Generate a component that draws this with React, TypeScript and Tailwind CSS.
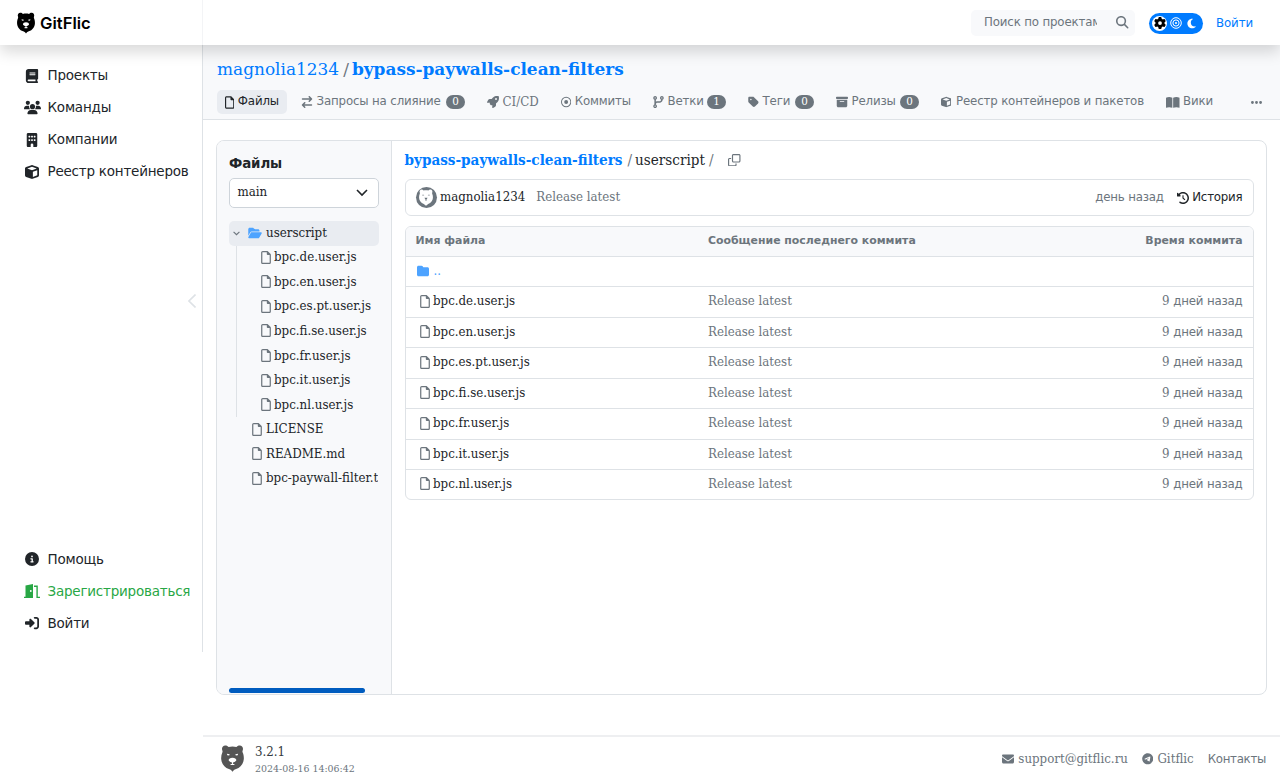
import { ReactNode } from "react";
import clsx from "clsx";
import {
  FaArrowRightArrowLeft,
  FaBook,
  FaBoxArchive,
  FaBuilding,
  FaCircleInfo,
  FaClockRotateLeft,
  FaCodeBranch,
  FaCube,
  FaEllipsis,
  FaEnvelope,
  FaFolder,
  FaFolderOpen,
  FaGear,
  FaMagnifyingGlass,
  FaMoon,
  FaRegCircleDot,
  FaRegClone,
  FaRegFile,
  FaRightToBracket,
  FaRocket,
  FaTag,
  FaTelegram,
  FaUsers,
} from "react-icons/fa6";

const sans = "font-['DejaVu_Sans',sans-serif]";
const serif = "font-['DejaVu_Serif_Condensed','DejaVu_Serif',serif]";
const serifWide = "font-['DejaVu_Serif',serif]";

const files = [
  "bpc.de.user.js",
  "bpc.en.user.js",
  "bpc.es.pt.user.js",
  "bpc.fi.se.user.js",
  "bpc.fr.user.js",
  "bpc.it.user.js",
  "bpc.nl.user.js",
];

const rootFiles = ["LICENSE", "README.md", "bpc-paywall-filter.txt"];

function BearIcon({ className, face }: { className?: string; face: string }) {
  return (
    <svg viewBox="0 0 22 26" className={className} fill="currentColor">
      <path d="M1.2 5.2C.2 2.6 1.8.4 4 .4c1.5 0 2.6.6 3.2 1.6 2.4-.7 5.2-.7 7.6 0C15.4 1 16.5.4 18 .4c2.2 0 3.8 2.2 2.8 4.8-.3.7-.3 1.3 0 2 .9 2 1.2 4 1.1 6.3-.2 4.3-3.1 8.1-7.4 9.7-1 .4-1.8.7-2.3 1.2L11 25.8l-1.2-1.4c-.5-.5-1.3-.8-2.3-1.2C3.2 21.6.3 17.8.1 13.5 0 11.2.3 9.2 1.2 7.2c.3-.7.3-1.3 0-2Z" />
      <g fill={face}>
        <path d="M5.6 8.4l2.700.6-.5 1.1-1.800-.3ZM16.400 8.400l-2.700.6.5 1.100 1.800-.3Z" />
        <path d="M11 12.200c2.200 0 3.700 1 3.700 2.300 0 .9-1.200 1.800-2.700 2.200-.5.2-.6.7-.6 1.300l1.700.6-.4.7H9.300l-.4-.7 1.700-.6c0-.6-.1-1.100-.6-1.300-1.500-.4-2.700-1.300-2.700-2.200 0-1.300 1.500-2.300 3.700-2.300Z" />
      </g>
    </svg>
  );
}

function Avatar() {
  return (
    <div className="flex size-[21px] items-center justify-center rounded-full bg-[#6c757d]">
      <svg viewBox="0 0 22 26" className="h-[17px] w-[14px]">
        <path
          fill="#fff"
          d="M1.2 5.2C.2 2.6 1.8.4 4 .4c1.5 0 2.6.6 3.2 1.6 2.4-.7 5.2-.7 7.6 0C15.4 1 16.5.4 18 .4c2.2 0 3.8 2.2 2.8 4.8-.3.7-.3 1.3 0 2 .9 2 1.2 4 1.1 6.3-.2 4.3-3.1 8.1-7.4 9.7L11 25.8l-3.500-2.600C3.200 21.600.3 17.800.1 13.500 0 11.200.3 9.200 1.200 7.200c.3-.7.3-1.300 0-2Z"
        />
        <path fill="#8d949a" d="M5 8.500h3V10H5ZM14 8.500h3V10h-3Z" />
        <path fill="#6c757d" d="M8.500 13.500h5L11.600 16.500v2h-1.200v-2Z" />
      </svg>
    </div>
  );
}

function OpenBook() {
  return (
    <svg viewBox="0 0 27 22" className="h-[11px] w-[13.5px]" fill="currentColor">
      <path d="M0 1.500C4-.3 8.500-.3 12.700 1.500v20C8.500 20 4 20 0 21.500ZM27 1.500C23-.3 18.500-.3 14.300 1.500v20c4.200-1.500 8.700-1.500 12.700 0Z" />
    </svg>
  );
}

function DoorIcon() {
  return (
    <svg viewBox="0 0 16 14" className="h-[14px] w-[16px] shrink-0" fill="currentColor">
      <path d="M1.500 1.600 9 0v14H0v-1.300h1.500Z" />
      <path d="M10 1.600h3.800v11.100H16V14h-3.600V2.900H10Z" />
      <circle cx="6.800" cy="7" r=".9" fill="#fff" />
    </svg>
  );
}

function Header() {
  return (
    <header className="relative z-10 flex h-[45px] shrink-0 items-center bg-white shadow-[0_7px_14px_rgba(0,0,0,0.15)]">
      <div className="flex h-full w-[203px] items-center border-r border-[#f3f4f6] pl-[17px]">
        <BearIcon className="h-[22px] w-[18px] text-black" face="#fff" />
        <span className="ml-[5px] mt-[2px] font-['Inter',sans-serif] text-[16.6px] font-semibold leading-none text-black">
          GitFlic
        </span>
      </div>
      <div className="ml-auto flex h-[26px] w-[164px] items-center rounded-[5px] bg-[#f8f9fb] pl-[13px] text-[#6c757d]">
        <span className={clsx(sans, "mt-px w-[113px] overflow-hidden whitespace-nowrap text-[11.8px] tracking-[-0.15px]")}>
          Поиск по проектам
        </span>
        <FaMagnifyingGlass className="ml-[19px] size-[12.5px]" />
      </div>
      <div className="ml-[14px] mt-px flex h-[21px] w-[54px] items-center rounded-full bg-[#007bff] pl-[3px] text-white">
        <span className="flex size-[15px] items-center justify-center rounded-full bg-white text-black">
          <FaGear className="size-[12px]" />
        </span>
        <svg viewBox="0 0 12 12" className="ml-[3px] size-[12px]" fill="none" stroke="currentColor">
          <circle cx="6" cy="6" r="5.3" strokeWidth="1" />
          <circle cx="6" cy="6" r="3.1" strokeWidth="1" />
          <circle cx="6" cy="6" r="1" fill="currentColor" stroke="none" />
        </svg>
        <FaMoon className="ml-[4px] size-[11px]" />
      </div>
      <a className={clsx(sans, "ml-[13px] mr-[28px] mt-[2px] w-[36px] whitespace-nowrap text-[11.8px] tracking-[-0.1px] text-[#007bff]")}>
        Войти
      </a>
    </header>
  );
}

function NavItem({ icon, label, className }: { icon: ReactNode; label: string; className?: string }) {
  return (
    <a className={clsx("flex h-8 items-center whitespace-nowrap", className ?? "text-[#212529]")}>
      <span className="flex w-[17px] justify-center">{icon}</span>
      <span className="ml-[7px]">{label}</span>
    </a>
  );
}

function Sidebar() {
  return (
    <aside
      className={clsx(
        sans,
        "relative flex h-[607px] w-[203px] shrink-0 flex-col border-r border-[#dee2e6] pl-[23.5px] pt-[14.5px] text-[13.5px] tracking-[-0.22px]"
      )}
    >
      <NavItem icon={<FaBook className="size-[14px]" />} label="Проекты" />
      <NavItem icon={<FaUsers className="size-[17px]" />} label="Команды" />
      <NavItem icon={<FaBuilding className="size-[14px]" />} label="Компании" />
      <NavItem icon={<FaCube className="size-[14px]" />} label="Реестр контейнеров" />
      <div className="mt-auto pb-[13px]">
        <NavItem icon={<FaCircleInfo className="size-[14px]" />} label="Помощь" />
        <NavItem icon={<DoorIcon />} label="Зарегистрироваться" className="text-[#28a745]" />
        <NavItem icon={<FaRightToBracket className="size-[14px]" />} label="Войти" />
      </div>
      <svg
        viewBox="0 0 8 14"
        className="absolute right-[6px] top-[249px] h-[14px] w-[8px]"
        fill="none"
        stroke="#dee2e6"
        strokeWidth="1.6"
      >
        <path d="M7.5.5 1 7l6.5 6.5" />
      </svg>
    </aside>
  );
}

interface TabProps {
  icon: ReactNode;
  label: string;
  width: string;
  count?: number;
  active?: boolean;
  latin?: boolean;
}

function Tab({ icon, label, width, count, active, latin }: TabProps) {
  return (
    <a
      className={clsx(
        "flex h-6 shrink-0 items-center whitespace-nowrap rounded-[5px] px-2",
        width,
        latin ? serif : sans,
        latin ? "text-[13.15px]" : "text-[11.8px] tracking-[-0.15px]",
        active ? "bg-[#e9ecf1] text-[#212529]" : "text-[#6c757d]"
      )}
    >
      {icon}
      <span className="ml-[3.5px]">{label}</span>
      {count !== undefined && (
        <span
          className={clsx(
            serif,
            "ml-auto flex h-[14px] w-[19px] items-center justify-center rounded-full bg-[#6c757d] text-[11.5px] tracking-normal text-white"
          )}
        >
          {count}
        </span>
      )}
    </a>
  );
}

function ProjectHeader() {
  return (
    <div className="h-[75px] border-b border-[#dee2e6] bg-[#f8f9fb] pl-[14px] pt-[13px]">
      <div className={clsx(serifWide, "flex h-6 items-center text-[16.95px] text-[#007bff]")}>
        <a>magnolia1234</a>
        <span className="ml-[4px] mr-[3px] text-[#6c757d]">/</span>
        <a className="font-bold">bypass-paywalls-clean-filters</a>
      </div>
      <nav className="mt-[8px] flex gap-[6px]">
        <Tab width="w-[70px]" active icon={<FaRegFile className="h-[13px] w-[10px]" />} label="Файлы" />
        <Tab width="w-[180px]" count={0} icon={<FaArrowRightArrowLeft className="size-[12px]" />} label="Запросы на слияние" />
        <Tab width="w-[68px]" latin icon={<FaRocket className="size-[12px]" />} label="CI/CD" />
        <Tab width="w-[86px]" icon={<FaRegCircleDot className="size-[12px]" />} label="Коммиты" />
        <Tab width="w-[89px]" count={1} icon={<FaCodeBranch className="h-[12px] w-[11px]" />} label="Ветки" />
        <Tab width="w-[82px]" count={0} icon={<FaTag className="h-[12px] w-[11px]" />} label="Теги" />
        <Tab width="w-[99px]" count={0} icon={<FaBoxArchive className="size-[12px]" />} label="Релизы" />
        <Tab width="w-[219px]" icon={<FaCube className="mr-px size-[12px]" />} label="Реестр контейнеров и пакетов" />
        <Tab width="w-[63px]" icon={<OpenBook />} label="Вики" />
        <span className="ml-[23px] flex h-6 items-center text-[#6c757d]">
          <FaEllipsis className="size-[13px]" />
        </span>
      </nav>
    </div>
  );
}

function FileTree() {
  return (
    <div className={clsx(serif, "flex w-[175px] shrink-0 flex-col border-r border-[#dee2e6] bg-[#f8f9fb] px-3 pt-[13px] text-[13.2px] text-[#212529]")}>
      <h2 className={clsx(sans, "flex h-5 items-center text-[13.4px] font-bold tracking-[-0.1px]")}>Файлы</h2>
      <div className="mt-[4px] flex h-[30px] w-[150px] shrink-0 items-center justify-between rounded-[5px] border border-[#ced4da] bg-white pl-[7.5px] pr-[10px]">
        <span className="pb-[2px]">main</span>
        <svg viewBox="0 0 12 8" className="h-[8px] w-[12px]" fill="none" stroke="#212529" strokeWidth="1.6">
          <path d="m1 1 5 5 5-5" />
        </svg>
      </div>

      <div className="mt-[13px] flex h-[24.5px] w-[150px] items-center rounded-[5px] bg-[#e9ecf1] pl-[4px]">
        <svg viewBox="0 0 8 6" className="h-[5px] w-[7px]" fill="none" stroke="#6c757d" strokeWidth="1.4">
          <path d="m.5 1 3.500 3.500L7.500 1" />
        </svg>
        <FaFolderOpen className="ml-[8px] h-[12px] w-[14px] text-[#4da3ff]" />
        <span className="ml-[4px] pb-px">userscript</span>
      </div>
      <div className="ml-[7px] border-l border-[#dee2e6]">
        {files.map((name) => (
          <div key={name} className="flex h-[24.55px] items-center whitespace-nowrap pb-px pl-[24px]">
            <FaRegFile className="h-[13px] w-[10px] text-[#6c757d]" />
            <span className="ml-[3px]">{name}</span>
          </div>
        ))}
      </div>
      {rootFiles.map((name) => (
        <div key={name} className="flex h-[24.55px] items-center overflow-hidden whitespace-nowrap pb-px pl-[23px]">
          <FaRegFile className="h-[13px] w-[10px] shrink-0 text-[#6c757d]" />
          <span className="ml-[4px] w-[112px] shrink-0 overflow-hidden">{name}</span>
        </div>
      ))}
      <div className="mb-px mt-auto h-[5px] w-[136px] rounded-full bg-[#005cbf]" />
    </div>
  );
}

function FileTable() {
  return (
    <div className="mt-[10px] overflow-hidden rounded-[6px] border border-[#dee2e6] text-[13.15px]">
      <div
        className={clsx(
          sans,
          "flex h-[29px] items-center bg-[#f8f9fb] px-[10px] text-[10.9px] font-bold text-[#6c757d]"
        )}
      >
        <span className="w-[292.5px]">Имя файла</span>
        <span>Сообщение последнего коммита</span>
        <span className="ml-auto">Время коммита</span>
      </div>
      <div className="flex h-[30.4px] items-center border-t border-[#dee2e6] pb-px pl-[11px] text-[#4da3ff]">
        <FaFolder className="size-[12px]" />
        <span className="ml-[5px]">..</span>
      </div>
      {files.map((name) => (
        <div key={name} className="flex h-[30.45px] items-center border-t border-[#dee2e6] px-[10px] pb-[1.5px] text-[#6c757d]">
          <div className="flex w-[292.5px] items-center pl-[4px]">
            <FaRegFile className="h-[13px] w-[10px]" />
            <span className="ml-[3.5px] text-[#212529]">{name}</span>
          </div>
          <span>Release latest</span>
          <span className="ml-auto">
            9 <span className={clsx(sans, "text-[11.8px] tracking-[-0.2px]")}>дней назад</span>
          </span>
        </div>
      ))}
    </div>
  );
}

function FileBrowser() {
  return (
    <div className={clsx(serif, "min-w-0 flex-1 pl-[12.5px] pr-[12.5px] text-[13.15px] text-[#6c757d]")}>
      <div className="flex h-[38px] items-center text-[15.1px]">
        <a className="font-bold text-[#007bff]">bypass-paywalls-clean-filters</a>
        <span className="ml-[5px]">/</span>
        <span className="ml-[3px] text-[#212529]">userscript</span>
        <span className="ml-[4px]">/</span>
        <FaRegClone className="ml-[15px] size-[12.5px]" />
      </div>
      <div className="flex h-[37px] items-center rounded-[6px] border border-[#dee2e6] px-[10px]">
        <Avatar />
        <span className="ml-[3.5px] pb-px text-[#212529]">magnolia1234</span>
        <span className="ml-[11px] pb-px">Release latest</span>
        <div className={clsx(sans, "ml-auto flex items-center text-[11.8px] tracking-[-0.2px]")}>
          <span>день назад</span>
          <span className="ml-[13.5px] flex items-center text-[#212529]">
            <FaClockRotateLeft className="size-[12px]" />
            <span className="ml-[3px]">История</span>
          </span>
        </div>
      </div>
      <FileTable />
    </div>
  );
}

function Footer() {
  return (
    <footer className={clsx(serif, "mt-[40px] flex h-[47px] items-center border-t-2 border-[#eeeff1] pl-[18px] pr-[14px] text-[13.15px] text-[#6c757d]")}>
      <BearIcon className="mb-[3px] h-[27px] w-[23px] text-[#555]" face="#fff" />
      <div className="mb-px ml-[11px]">
        <div className="h-[17px] leading-[17px] text-[#343a40]">3.2.1</div>
        <div className={clsx(serifWide, "h-[16px] text-[9.45px] leading-[17px]")}>2024-08-16 14:06:42</div>
      </div>
      <a className="mb-px ml-auto flex items-center">
        <FaEnvelope className="mr-[4px] size-[12px]" />
        support@gitflic.ru
      </a>
      <a className="mb-px ml-[14px] flex items-center">
        <FaTelegram className="mr-[4px] size-[11.5px]" />
        Gitflic
      </a>
      <a className={clsx(sans, "ml-[14px] text-[11.8px] tracking-[-0.3px]")}>Контакты</a>
    </footer>
  );
}

export default function App() {
  return (
    <div className="flex h-[782px] w-[1280px] flex-col overflow-hidden bg-white">
      <Header />
      <div className="flex flex-1">
        <Sidebar />
        <main className="flex min-w-0 flex-1 flex-col">
          <ProjectHeader />
          <div className="ml-[13px] mr-[13px] mt-[20px] flex h-[555px] overflow-hidden rounded-[8px] border border-[#dee2e6]">
            <FileTree />
            <FileBrowser />
          </div>
          <Footer />
        </main>
      </div>
    </div>
  );
}
